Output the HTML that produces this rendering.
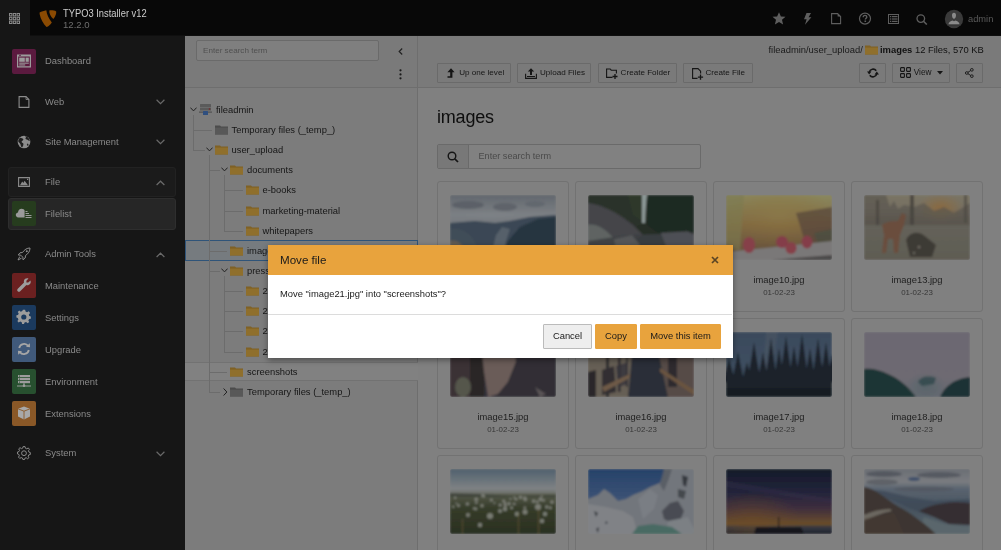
<!DOCTYPE html>
<html><head><meta charset="utf-8">
<style>
*{box-sizing:border-box;margin:0;padding:0}
html,body{width:1001px;height:550px;overflow:hidden;background:#7f7f7f;font-family:"Liberation Sans",sans-serif;font-size:9.4px;color:#111}
.abs{position:absolute}
#topbar{position:absolute;z-index:2;left:0;top:0;width:1001px;height:35px;background:#080808;box-shadow:0 1px 0 #0f0f0f}
#tgl{position:absolute;left:0;top:0;width:30px;height:36px;background:#161616}
#side{position:absolute;left:0;top:35px;width:185px;height:515px;background:#161616}
.mi{position:absolute;left:45px;color:#8a8a8a;font-size:9.4px;line-height:12px;white-space:nowrap}
.ibox{position:absolute;left:12px;width:24px;height:24px;border-radius:2px}
#tree{position:absolute;left:185px;top:35px;width:233px;height:515px;background:#7c7c7c;border-right:1px solid #6e6e6e}
#treehead{position:absolute;left:0;top:0;width:232px;height:53px;background:#7a7a7a;border-bottom:1px solid #6e6e6e}
#content{position:absolute;left:418px;top:35px;width:583px;height:515px;background:#808080}
#dochead{position:absolute;left:0;top:0;width:583px;height:53px;background:#7a7a7a;border-bottom:1px solid #6e6e6e}
.btn{position:absolute;height:20px;border:1px solid #6a6a6a;background:#7a7a7a;border-radius:1px;font-size:8.6px;color:#1a1a1a;line-height:18px;white-space:nowrap}
.tr{position:absolute;white-space:nowrap;font-size:9.4px;color:#161616;line-height:12px}
.card{position:absolute;width:132px;height:131px;border:1px solid #727272;border-radius:3px;background:#808080}
.card .img{position:absolute;left:12px;top:13px;width:106px;height:65px;overflow:hidden;border-radius:2px}
.card .img svg{filter:blur(0.7px)}
.card .nm{position:absolute;left:0;width:130px;top:92.4px;text-align:center;font-size:9.4px;color:#1e1e1e;line-height:12px}
.card .dt{position:absolute;left:0;width:130px;top:106.4px;text-align:center;font-size:7.9px;color:#363636;line-height:10px}
#modal{position:absolute;left:268px;top:245px;width:465px;height:113px;background:#fff;box-shadow:0 2px 6px rgba(0,0,0,.4)}
#mhead{position:absolute;left:0;top:0;width:465px;height:30px;background:#e8a33d}
.mbtn{position:absolute;top:79px;height:25px;border-radius:1px;font-size:9.4px;line-height:22px;text-align:center;color:#1a1a1a}
</style></head><body>
<div id="root" style="position:absolute;left:0;top:0;width:1001px;height:550px;will-change:transform">
<!-- TOPBAR -->
<div id="topbar">
  <div id="tgl">
    <svg class="abs" style="left:9px;top:13px" width="11" height="11" viewBox="0 0 11 11"><g fill="none" stroke="#8a8a8a" stroke-width="1"><rect x="0.5" y="0.5" width="2.4" height="2.4"/><rect x="4.3" y="0.5" width="2.4" height="2.4"/><rect x="8.1" y="0.5" width="2.4" height="2.4"/><rect x="0.5" y="4.3" width="2.4" height="2.4"/><rect x="4.3" y="4.3" width="2.4" height="2.4"/><rect x="8.1" y="4.3" width="2.4" height="2.4"/><rect x="0.5" y="8.1" width="2.4" height="2.4"/><rect x="4.3" y="8.1" width="2.4" height="2.4"/><rect x="8.1" y="8.1" width="2.4" height="2.4"/></g></svg>
  </div>
  <svg class="abs" style="left:36px;top:6px" width="24" height="24" viewBox="0 0 24 24">
    <path d="M3.6 6.6 C5.5 5.6 8 4.8 10.3 4.3 C10.8 8 12.5 12.5 15.8 16.4 C14.6 18.5 12.5 20.3 10.5 21.1 C7.5 18 4.5 13 3.6 8 Z" fill="#8a4a02"/>
    <path d="M13.3 4.4 C15.5 4.1 18.5 4.3 20.2 5.4 C20.4 6.8 20 9.5 17.4 13 C14.8 10.8 13 7 13.3 4.4 Z" fill="#8a4a02"/>
  </svg>
  <div class="abs" style="left:63px;top:8px;font-size:10.4px;color:#cdcdcd;line-height:12px;white-space:nowrap;transform:scaleX(0.9);transform-origin:0 0">TYPO3 Installer v12</div>
  <div class="abs" style="left:63px;top:19px;font-size:9.6px;color:#6e6e6e;line-height:12px">12.2.0</div>
  <!-- right icons -->
  <svg class="abs" style="left:772px;top:12px" width="14" height="13" viewBox="0 0 14 13"><path d="M7 0.3 L8.9 4.4 L13.5 4.8 L10 7.8 L11.1 12.5 L7 10 L2.9 12.5 L4 7.8 L0.5 4.8 L5.1 4.4 Z" fill="#5e5e5e"/></svg>
  <svg class="abs" style="left:803px;top:13px" width="9" height="12" viewBox="0 0 9 12"><path d="M3.5 0 L8 0 L5.6 4.2 L8.4 4.2 L2 11.8 L3.6 6.3 L1 6.3 Z" fill="#5e5e5e"/></svg>
  <svg class="abs" style="left:831px;top:13px" width="11" height="12" viewBox="0 0 11 12"><path d="M0.6 0.6 H6.6 L9.6 3.6 V10.6 H0.6 Z" fill="none" stroke="#5e5e5e" stroke-width="1.1"/><path d="M6.6 0.6 V3.6 H9.6" fill="#5e5e5e"/></svg>
  <svg class="abs" style="left:858px;top:12px" width="14" height="14" viewBox="0 0 14 14"><circle cx="7" cy="6.6" r="5.5" fill="none" stroke="#5e5e5e" stroke-width="1.2"/><path d="M5.2 5.2 C5.2 4 6 3.4 7 3.4 C8 3.4 8.8 4 8.8 5 C8.8 6.2 7.3 6.3 7.3 7.6" fill="none" stroke="#5e5e5e" stroke-width="1.4"/><rect x="6.5" y="8.5" width="1.6" height="1.5" fill="#5e5e5e"/></svg>
  <svg class="abs" style="left:888px;top:14px" width="11" height="10" viewBox="0 0 11 10"><rect x="0.5" y="0.5" width="10" height="9" fill="none" stroke="#5e5e5e" stroke-width="1"/><g fill="#5e5e5e"><rect x="2" y="2" width="1.3" height="1.2"/><rect x="4" y="2" width="5.5" height="1.2"/><rect x="2" y="4.4" width="1.3" height="1.2"/><rect x="4" y="4.4" width="5.5" height="1.2"/><rect x="2" y="6.8" width="1.3" height="1.2"/><rect x="4" y="6.8" width="5.5" height="1.2"/></g></svg>
  <svg class="abs" style="left:916px;top:14px" width="12" height="11" viewBox="0 0 12 11"><circle cx="4.8" cy="4.6" r="3.8" fill="none" stroke="#5e5e5e" stroke-width="1.3"/><path d="M7.5 7.3 L10.8 10.5" stroke="#5e5e5e" stroke-width="1.6"/></svg>
  <svg class="abs" style="left:944px;top:8.5px" width="20" height="20" viewBox="0 0 20 20"><circle cx="10" cy="10" r="9.2" fill="#3a3a3a"/><path d="M10 3.8 C8.6 3.8 8 4.9 8 6.3 C8 8.2 8.8 9.8 10 9.8 C11.2 9.8 12 8.2 12 6.3 C12 4.9 11.4 3.8 10 3.8 Z M4.4 15.3 C4.9 13.2 6.6 12.3 8.6 11.6 L10 12.3 L11.4 11.6 C13.4 12.3 15.1 13.2 15.6 15.3 Z" fill="#8a8a8a"/><path d="M3.6 16 H16.4 V16.8 H3.6 Z" fill="#333"/></svg>
  <div class="abs" style="left:968px;top:13px;font-size:9.3px;color:#5a5a5a;line-height:12px">admin</div>
</div>

<!-- SIDEBAR -->
<div id="side">
  <!-- Dashboard -->
  <div class="ibox" style="top:14px;height:25px;background:#5b1a3f"></div>
  <svg class="abs" style="left:16px;top:18px" width="16" height="16" viewBox="0 0 16 16"><g fill="#9c9c9c"><path d="M1 1.5 H15 V14.5 H1 Z M2.2 3.6 V13.3 H13.8 V3.6 Z"/><rect x="3" y="1.9" width="2" height=".8" fill="#5a1a3e"/><rect x="3.2" y="4.6" width="5.6" height="4.2"/><rect x="9.6" y="4.6" width="3.2" height="4.2"/><rect x="3.2" y="9.6" width="9.6" height="1.1"/><rect x="3.2" y="11.4" width="6" height="1.1"/></g></svg>
  <div class="mi" style="top:20px">Dashboard</div>
  <!-- Web -->
  <svg class="abs" style="left:18px;top:61px" width="12" height="12" viewBox="0 0 12 12"><path d="M1.1 0.6 H8 L10.9 3.5 V11.4 H1.1 Z" fill="none" stroke="#8c8c8c" stroke-width="1.1"/><path d="M8 0.6 V3.5 H10.9" fill="none" stroke="#8c8c8c" stroke-width=".8"/></svg>
  <div class="mi" style="top:60.7px">Web</div>
  <svg class="abs chev" style="left:156px;top:64px" width="9" height="6" viewBox="0 0 9 6"><path d="M0.6 0.8 L4.5 4.6 L8.4 0.8" fill="none" stroke="#6a6a6a" stroke-width="1.2"/></svg>
  <!-- Site Management -->
  <svg class="abs" style="left:17px;top:100px" width="14" height="14" viewBox="0 0 14 14"><circle cx="7" cy="7" r="6.3" fill="#8c8c8c"/><path d="M3.2 2.8 C4.5 3.5 5.5 3 6.2 4 C6.8 5 5.5 5.8 4.8 6.2 C4.2 6.8 5 7.8 5.8 8 C6.8 8.4 6.5 9.8 6 11 C5.5 12 5.2 12.6 4.6 12.3 C3.6 11 3.8 9.6 3 8.6 C2.2 7.5 1.3 7 1.2 6 C1.5 4.6 2.2 3.5 3.2 2.8 Z M8 1 C8.8 1.6 9.3 2.4 8.6 3.1 C8 3.6 8.8 4.4 9.6 4.6 C10.8 4.9 11.6 5.8 12.8 6 C12.6 3.5 10.6 1.4 8 1 Z M10.5 8.5 C11.2 8.8 11.8 9.8 11.4 10.4 C10.8 11.2 10 10.5 9.8 9.8 Z" fill="#1f1f1f"/></svg>
  <div class="mi" style="top:100.7px">Site Management</div>
  <svg class="abs chev" style="left:156px;top:104px" width="9" height="6" viewBox="0 0 9 6"><path d="M0.6 0.8 L4.5 4.6 L8.4 0.8" fill="none" stroke="#6a6a6a" stroke-width="1.2"/></svg>
  <!-- File group -->
  <div class="abs" style="left:8px;top:132px;width:168px;height:30px;background:#1b1b1b;border:1px solid #222;border-radius:3px"></div>
  <svg class="abs" style="left:18px;top:142px" width="12" height="10" viewBox="0 0 12 10"><path d="M0.6 0.6 H11.4 V9.4 H0.6 Z" fill="none" stroke="#8c8c8c" stroke-width="1.1"/><path d="M2 8.2 L4.2 4.6 L5.4 6 L6.6 3.8 L10 8.2 Z" fill="#8c8c8c"/><rect x="9" y="1.8" width="1.2" height="1.2" fill="#8c8c8c"/></svg>
  <div class="mi" style="top:141px">File</div>
  <svg class="abs chev" style="left:156px;top:145px" width="9" height="6" viewBox="0 0 9 6"><path d="M0.6 5 L4.5 1.2 L8.4 5" fill="none" stroke="#6a6a6a" stroke-width="1.2"/></svg>
  <!-- Filelist -->
  <div class="abs" style="left:8px;top:163px;width:168px;height:32px;background:#262626;border:1px solid #2e2e2e;border-radius:3px"></div>
  <div class="ibox" style="top:166px;height:25px;background:#263c1e"></div>
  <svg class="abs" style="left:15px;top:170px" width="18" height="16" viewBox="0 0 18 16"><path d="M3.5 12.5 C1.5 12.5 0.8 11 0.8 9.8 C0.8 8.3 2 7.4 3 7.4 C3.1 5.4 4.6 3.8 6.6 3.8 C8.2 3.8 9.2 4.6 9.6 5.5 V12.5 Z" fill="#9a9a9a"/><g fill="#9a9a9a"><rect x="10.5" y="6" width="2" height="1"/><rect x="10.5" y="8" width="3.5" height="1"/><rect x="10.5" y="10" width="6" height="1"/><rect x="10.5" y="12" width="6" height="1"/></g></svg>
  <div class="mi" style="top:173px">Filelist</div>
  <!-- Admin Tools -->
  <svg class="abs" style="left:17px;top:212px" width="14" height="14" viewBox="0 0 14 14"><path d="M13 1 C10 1 7.5 2.5 5.5 5.5 L3 5.8 L1.2 8 L3.8 8.2 L5.8 10.2 L6 12.8 L8.2 11 L8.5 8.5 C11.5 6.5 13 4 13 1 Z M2.8 9.5 L1 13 L4.5 11.2" fill="none" stroke="#8c8c8c" stroke-width="1"/><circle cx="9.8" cy="4.2" r="1" fill="#8c8c8c"/></svg>
  <div class="mi" style="top:213px">Admin Tools</div>
  <svg class="abs chev" style="left:156px;top:217px" width="9" height="6" viewBox="0 0 9 6"><path d="M0.6 5 L4.5 1.2 L8.4 5" fill="none" stroke="#6a6a6a" stroke-width="1.2"/></svg>
  <!-- Maintenance -->
  <div class="ibox" style="top:238px;height:25px;background:#6b2020"></div>
  <svg class="abs" style="left:16px;top:242px" width="16" height="16" viewBox="0 0 16 16"><path d="M14.5 3.5 L12.2 5.6 L10.4 5.6 L10.4 3.8 L12.5 1.5 C10.5 0.8 8.6 1.6 8 3.4 C7.7 4.3 7.8 5 8 5.6 L1.8 11.8 C1 12.6 1 13.6 1.7 14.3 C2.4 15 3.4 15 4.2 14.2 L10.4 8 C11 8.2 11.7 8.3 12.6 8 C14.4 7.4 15.2 5.5 14.5 3.5 Z" fill="#9c9c9c"/></svg>
  <div class="mi" style="top:245px">Maintenance</div>
  <!-- Settings -->
  <div class="ibox" style="top:270px;height:25px;background:#1b3a5e"></div>
  <svg class="abs" style="left:16px;top:274px" width="16" height="16" viewBox="0 0 16 16"><path d="M6.8 1 H9.2 L9.6 3 L11.2 3.8 L13 2.7 L14.4 4.4 L13.1 6 L13.5 7.6 L15.2 8.3 V10.5 L13.4 10.8 L12.6 12.4 L13.5 14 L11.8 15.2 L10.2 14 L8.6 14.4 L8 16 H6 L5.6 14.3 L4 13.6 L2.4 14.6 L1 13 L2.1 11.5 L1.5 9.8 L0 9.2 V7 L1.7 6.5 L2.4 5 L1.4 3.4 L3 2 L4.6 3.1 L6.2 2.5 Z" fill="#9c9c9c" transform="translate(0.4,-0.3) scale(0.95)"/><circle cx="7.8" cy="8" r="2.6" fill="#1b3a5e"/></svg>
  <div class="mi" style="top:277px">Settings</div>
  <!-- Upgrade -->
  <div class="ibox" style="top:302px;height:25px;background:#40597a"></div>
  <svg class="abs" style="left:16px;top:306px" width="16" height="16" viewBox="0 0 16 16"><path d="M3.2 7 A5 5 0 0 1 12.2 5" fill="none" stroke="#a6a6a6" stroke-width="1.8"/><path d="M12.8 9 A5 5 0 0 1 3.8 11" fill="none" stroke="#a6a6a6" stroke-width="1.8"/><path d="M10 5.8 L14 6.2 L13.8 2.2 Z M6 10.2 L2 9.8 L2.2 13.8 Z" fill="#a6a6a6"/></svg>
  <div class="mi" style="top:309px">Upgrade</div>
  <!-- Environment -->
  <div class="ibox" style="top:334px;height:25px;background:#27502f"></div>
  <svg class="abs" style="left:16px;top:338px" width="16" height="16" viewBox="0 0 16 16"><g fill="#9c9c9c"><rect x="2" y="2" width="12" height="2.2"/><rect x="2" y="5" width="12" height="2.2"/><rect x="2" y="8" width="12" height="2.2"/><rect x="7.4" y="10.2" width="1.2" height="2.5"/><rect x="1" y="12.5" width="14" height="1"/><circle cx="8" cy="12.8" r="1.3"/></g><g fill="#27502f"><rect x="3" y="2.6" width="1" height="1"/><rect x="3" y="5.6" width="1" height="1"/><rect x="3" y="8.6" width="1" height="1"/></g></svg>
  <div class="mi" style="top:341px">Environment</div>
  <!-- Extensions -->
  <div class="ibox" style="top:366px;height:25px;background:#8a5827"></div>
  <svg class="abs" style="left:16px;top:370px" width="16" height="16" viewBox="0 0 16 16"><path d="M8 1.5 L14 3.8 V11.6 L8 14.5 L2 11.6 V3.8 Z" fill="#a8a8a8"/><path d="M2 3.8 L8 6.2 L14 3.8 M8 6.2 V14.5" fill="none" stroke="#8a5827" stroke-width=".9"/></svg>
  <div class="mi" style="top:373px">Extensions</div>
  <!-- System -->
  <svg class="abs" style="left:17px;top:411px" width="14" height="14" viewBox="0 0 14 14"><path d="M6 0.8 H8 L8.4 2.5 L9.8 3.1 L11.3 2.2 L12.5 3.6 L11.5 5 L11.9 6.4 L13.4 6.9 V8.9 L11.8 9.3 L11.2 10.6 L12 12.1 L10.6 13.2 L9.2 12.2 L7.9 12.6 L7.5 14 H5.8 L5.4 12.5 L4 12 L2.6 12.9 L1.3 11.5 L2.2 10.2 L1.7 8.8 L0.3 8.3 V6.3 L1.8 5.9 L2.4 4.6 L1.5 3.2 L2.9 1.9 L4.3 2.9 L5.6 2.4 Z" fill="none" stroke="#8c8c8c" stroke-width="1" transform="translate(0.2,-0.2) scale(0.98)"/><circle cx="7" cy="7.2" r="2.4" fill="none" stroke="#8c8c8c" stroke-width="1"/></svg>
  <div class="mi" style="top:412px">System</div>
  <svg class="abs chev" style="left:156px;top:416px" width="9" height="6" viewBox="0 0 9 6"><path d="M0.6 0.8 L4.5 4.6 L8.4 0.8" fill="none" stroke="#6a6a6a" stroke-width="1.2"/></svg>
</div>

<!-- TREE -->
<div id="tree">
  <div id="treehead">
    <div class="abs" style="left:11px;top:5px;width:183px;height:21px;background:#7f7f7f;border:1px solid #6a6a6a;border-radius:2px"></div>
    <div class="abs" style="left:18px;top:10px;font-size:8.1px;line-height:11px;color:#505050;white-space:nowrap">Enter search term</div>
    <svg class="abs" style="left:212.5px;top:13px" width="5" height="7" viewBox="0 0 5 7"><path d="M4.2 0.5 L1.2 3.5 L4.2 6.5" fill="none" stroke="#222" stroke-width="1.2"/></svg>
    <svg class="abs" style="left:214px;top:34px" width="3" height="11" viewBox="0 0 3 11"><circle cx="1.5" cy="1.3" r="1.1" fill="#1a1a1a"/><circle cx="1.5" cy="5.4" r="1.1" fill="#1a1a1a"/><circle cx="1.5" cy="9.3" r="1.1" fill="#1a1a1a"/></svg>
  </div>
<div class="abs" style="left:0;top:205px;width:233px;height:21px;background:#767b7f;border:1px solid #2f5479"></div>
<div class="abs" style="left:0;top:326.5px;width:233px;height:19.5px;background:#818181;border-top:1px solid #727272;border-bottom:1px solid #727272"></div>
<div class="abs" style="left:8.0px;top:79.8px;width:1.0px;height:35.3px;background:#6c6c6c"></div>
<div class="abs" style="left:8.0px;top:94.9px;width:18.5px;height:1.0px;background:#6c6c6c"></div>
<div class="abs" style="left:8.0px;top:115.1px;width:11.5px;height:1.0px;background:#6c6c6c"></div>
<div class="abs" style="left:23.5px;top:120.1px;width:1.0px;height:236.8px;background:#6c6c6c"></div>
<div class="abs" style="left:23.5px;top:135.2px;width:11.5px;height:1.0px;background:#6c6c6c"></div>
<div class="abs" style="left:23.5px;top:215.8px;width:18.5px;height:1.0px;background:#6c6c6c"></div>
<div class="abs" style="left:23.5px;top:236.0px;width:11.5px;height:1.0px;background:#6c6c6c"></div>
<div class="abs" style="left:23.5px;top:336.8px;width:18.5px;height:1.0px;background:#6c6c6c"></div>
<div class="abs" style="left:23.5px;top:356.9px;width:11.5px;height:1.0px;background:#6c6c6c"></div>
<div class="abs" style="left:39.0px;top:140.2px;width:1.0px;height:55.4px;background:#6c6c6c"></div>
<div class="abs" style="left:39.0px;top:155.4px;width:18.5px;height:1.0px;background:#6c6c6c"></div>
<div class="abs" style="left:39.0px;top:175.6px;width:18.5px;height:1.0px;background:#6c6c6c"></div>
<div class="abs" style="left:39.0px;top:195.7px;width:18.5px;height:1.0px;background:#6c6c6c"></div>
<div class="abs" style="left:39.0px;top:241.0px;width:1.0px;height:75.6px;background:#6c6c6c"></div>
<div class="abs" style="left:39.0px;top:256.1px;width:18.5px;height:1.0px;background:#6c6c6c"></div>
<div class="abs" style="left:39.0px;top:276.3px;width:18.5px;height:1.0px;background:#6c6c6c"></div>
<div class="abs" style="left:39.0px;top:296.4px;width:18.5px;height:1.0px;background:#6c6c6c"></div>
<div class="abs" style="left:39.0px;top:316.6px;width:18.5px;height:1.0px;background:#6c6c6c"></div>
<svg class="abs" style="left:5.0px;top:71.8px" width="7" height="5" viewBox="0 0 7 5"><path d="M0.4 0.6 L3.5 3.9 L6.6 0.6" fill="none" stroke="#222" stroke-width="1"/></svg>
<svg class="abs" style="left:14.0px;top:68.8px" width="13" height="11" viewBox="0 0 13 11"><rect x="1" y="0" width="11" height="3" rx=".5" fill="#5a5a5a"/><rect x="1" y="3.6" width="11" height="3" rx=".5" fill="#5a5a5a"/><rect x="0" y="7.6" width="13" height="1" fill="#4a4a4a"/><rect x="4" y="7" width="5" height="4" rx=".6" fill="#2f4f7f"/><rect x="9.8" y="4.4" width="1.4" height="1.2" fill="#7a2020"/></svg>
<div class="tr" style="left:31.0px;top:68.8px">fileadmin</div>
<svg class="abs" style="left:29.5px;top:89.94999999999999px" width="13" height="10" viewBox="0 0 13 10"><path d="M0 0.6 H5 L6 1.6 H13 V9.4 H0 Z" fill="#4c4c4c"/><rect x="0" y="2.6" width="13" height="6.8" fill="#585858"/></svg>
<div class="tr" style="left:46.5px;top:88.94999999999999px">Temporary files (_temp_)</div>
<svg class="abs" style="left:20.5px;top:112.1px" width="7" height="5" viewBox="0 0 7 5"><path d="M0.4 0.6 L3.5 3.9 L6.6 0.6" fill="none" stroke="#222" stroke-width="1"/></svg>
<svg class="abs" style="left:29.5px;top:110.1px" width="13" height="10" viewBox="0 0 13 10"><path d="M0 0.6 H5 L6 1.6 H13 V9.4 H0 Z" fill="#7f6125"/><rect x="0" y="2.6" width="13" height="6.8" fill="#8f6f2c"/></svg>
<div class="tr" style="left:46.5px;top:109.1px">user_upload</div>
<svg class="abs" style="left:36.0px;top:132.25px" width="7" height="5" viewBox="0 0 7 5"><path d="M0.4 0.6 L3.5 3.9 L6.6 0.6" fill="none" stroke="#222" stroke-width="1"/></svg>
<svg class="abs" style="left:45.0px;top:130.25px" width="13" height="10" viewBox="0 0 13 10"><path d="M0 0.6 H5 L6 1.6 H13 V9.4 H0 Z" fill="#7f6125"/><rect x="0" y="2.6" width="13" height="6.8" fill="#8f6f2c"/></svg>
<div class="tr" style="left:62.0px;top:129.25px">documents</div>
<svg class="abs" style="left:60.5px;top:150.39999999999998px" width="13" height="10" viewBox="0 0 13 10"><path d="M0 0.6 H5 L6 1.6 H13 V9.4 H0 Z" fill="#7f6125"/><rect x="0" y="2.6" width="13" height="6.8" fill="#8f6f2c"/></svg>
<div class="tr" style="left:77.5px;top:149.39999999999998px">e-books</div>
<svg class="abs" style="left:60.5px;top:170.55px" width="13" height="10" viewBox="0 0 13 10"><path d="M0 0.6 H5 L6 1.6 H13 V9.4 H0 Z" fill="#7f6125"/><rect x="0" y="2.6" width="13" height="6.8" fill="#8f6f2c"/></svg>
<div class="tr" style="left:77.5px;top:169.55px">marketing-material</div>
<svg class="abs" style="left:60.5px;top:190.7px" width="13" height="10" viewBox="0 0 13 10"><path d="M0 0.6 H5 L6 1.6 H13 V9.4 H0 Z" fill="#7f6125"/><rect x="0" y="2.6" width="13" height="6.8" fill="#8f6f2c"/></svg>
<div class="tr" style="left:77.5px;top:189.7px">whitepapers</div>
<svg class="abs" style="left:45.0px;top:210.84999999999997px" width="13" height="10" viewBox="0 0 13 10"><path d="M0 0.6 H5 L6 1.6 H13 V9.4 H0 Z" fill="#7f6125"/><rect x="0" y="2.6" width="13" height="6.8" fill="#8f6f2c"/></svg>
<div class="tr" style="left:62.0px;top:209.84999999999997px">images</div>
<svg class="abs" style="left:36.0px;top:233.0px" width="7" height="5" viewBox="0 0 7 5"><path d="M0.4 0.6 L3.5 3.9 L6.6 0.6" fill="none" stroke="#222" stroke-width="1"/></svg>
<svg class="abs" style="left:45.0px;top:231.0px" width="13" height="10" viewBox="0 0 13 10"><path d="M0 0.6 H5 L6 1.6 H13 V9.4 H0 Z" fill="#7f6125"/><rect x="0" y="2.6" width="13" height="6.8" fill="#8f6f2c"/></svg>
<div class="tr" style="left:62.0px;top:230.0px">press</div>
<svg class="abs" style="left:60.5px;top:251.14999999999998px" width="13" height="10" viewBox="0 0 13 10"><path d="M0 0.6 H5 L6 1.6 H13 V9.4 H0 Z" fill="#7f6125"/><rect x="0" y="2.6" width="13" height="6.8" fill="#8f6f2c"/></svg>
<div class="tr" style="left:77.5px;top:250.14999999999998px">2022</div>
<svg class="abs" style="left:60.5px;top:271.3px" width="13" height="10" viewBox="0 0 13 10"><path d="M0 0.6 H5 L6 1.6 H13 V9.4 H0 Z" fill="#7f6125"/><rect x="0" y="2.6" width="13" height="6.8" fill="#8f6f2c"/></svg>
<div class="tr" style="left:77.5px;top:270.3px">2021</div>
<svg class="abs" style="left:60.5px;top:291.45px" width="13" height="10" viewBox="0 0 13 10"><path d="M0 0.6 H5 L6 1.6 H13 V9.4 H0 Z" fill="#7f6125"/><rect x="0" y="2.6" width="13" height="6.8" fill="#8f6f2c"/></svg>
<div class="tr" style="left:77.5px;top:290.45px">2020</div>
<svg class="abs" style="left:60.5px;top:311.59999999999997px" width="13" height="10" viewBox="0 0 13 10"><path d="M0 0.6 H5 L6 1.6 H13 V9.4 H0 Z" fill="#7f6125"/><rect x="0" y="2.6" width="13" height="6.8" fill="#8f6f2c"/></svg>
<div class="tr" style="left:77.5px;top:310.59999999999997px">2019</div>
<svg class="abs" style="left:45.0px;top:331.75px" width="13" height="10" viewBox="0 0 13 10"><path d="M0 0.6 H5 L6 1.6 H13 V9.4 H0 Z" fill="#7f6125"/><rect x="0" y="2.6" width="13" height="6.8" fill="#8f6f2c"/></svg>
<div class="tr" style="left:62.0px;top:330.75px">screenshots</div>
<svg class="abs" style="left:37.5px;top:352.9px" width="5" height="8" viewBox="0 0 5 8"><path d="M0.6 0.5 L3.9 4 L0.6 7.5" fill="none" stroke="#222" stroke-width="1"/></svg>
<svg class="abs" style="left:45.0px;top:351.9px" width="13" height="10" viewBox="0 0 13 10"><path d="M0 0.6 H5 L6 1.6 H13 V9.4 H0 Z" fill="#4c4c4c"/><rect x="0" y="2.6" width="13" height="6.8" fill="#585858"/></svg>
<div class="tr" style="left:62.0px;top:350.9px">Temporary files (_temp_)</div>
</div>

<!-- CONTENT -->
<div id="content">
<div id="dochead">
<div class="abs" style="left:350.5px;top:9px;font-size:9.4px;line-height:12px;color:#1a1a1a;white-space:nowrap">fileadmin/user_upload/</div>
<svg class="abs" style="left:447.0px;top:10.0px" width="13" height="10" viewBox="0 0 13 10"><path d="M0 0.6 H5 L6 1.6 H13 V9.4 H0 Z" fill="#7f6125"/><rect x="0" y="2.6" width="13" height="6.8" fill="#8f6f2c"/></svg>
<div class="abs" style="left:462px;top:9px;font-size:9.4px;line-height:12px;color:#111;white-space:nowrap"><b>images</b> 12 Files, 570 KB</div>
<div class="btn" style="left:19.0px;top:28px;width:74.0px"></div>
<svg class="abs" style="left:29.0px;top:33px" width="8" height="11" viewBox="0 0 8 11"><path d="M4 0.3 L7.6 4.2 H5.4 V9.8 H0.5 V8.2 H3.2 V4.2 H0.4 Z" fill="#151515"/></svg>
<div class="abs" style="left:41.2px;top:32.5px;font-size:8.1px;line-height:10px;color:#161616;white-space:nowrap">Up one level</div>
<div class="btn" style="left:99.0px;top:28px;width:74.0px"></div>
<svg class="abs" style="left:106.7px;top:33px" width="12" height="11" viewBox="0 0 12 11"><path d="M6 0.3 L9.2 3.6 H7 V7 H5 V3.6 H2.8 Z" fill="#151515"/><path d="M0.6 5.8 V10.4 H11.4 V5.8" fill="none" stroke="#151515" stroke-width="1.1"/><rect x="2" y="8" width="8" height="1" fill="#151515"/></svg>
<div class="abs" style="left:122.0px;top:32.5px;font-size:8.1px;line-height:10px;color:#161616;white-space:nowrap">Upload Files</div>
<div class="btn" style="left:180.0px;top:28px;width:79.0px"></div>
<svg class="abs" style="left:187.8px;top:33px" width="12" height="11" viewBox="0 0 12 11"><path d="M6.5 9.4 H0.6 V1 H4.2 L5.2 2.2 H10.4 V5.5" fill="none" stroke="#151515" stroke-width="1.1"/><path d="M9 6 V11 M6.5 8.5 H11.5" stroke="#151515" stroke-width="1.3"/></svg>
<div class="abs" style="left:202.6px;top:32.5px;font-size:8.1px;line-height:10px;color:#161616;white-space:nowrap">Create Folder</div>
<div class="btn" style="left:265.0px;top:28px;width:70.0px"></div>
<svg class="abs" style="left:273.5px;top:33px" width="12" height="12" viewBox="0 0 12 12"><path d="M5.5 10.4 H0.6 V0.6 H6 L8.6 3.2 V5.5" fill="none" stroke="#151515" stroke-width="1.1"/><path d="M8.5 6.5 V11.8 M5.9 9.1 H11.1" stroke="#151515" stroke-width="1.3"/></svg>
<div class="abs" style="left:287.4px;top:32.5px;font-size:8.1px;line-height:10px;color:#161616;white-space:nowrap">Create File</div>
<div class="btn" style="left:441px;top:28px;width:27px"></div>
<svg class="abs" style="left:448.5px;top:31.5px" width="12" height="12" viewBox="0 0 12 12"><path d="M2.3 5.2 A3.8 3.8 0 0 1 9.2 3.8" fill="none" stroke="#151515" stroke-width="1.6"/><path d="M9.7 6.8 A3.8 3.8 0 0 1 2.8 8.2" fill="none" stroke="#151515" stroke-width="1.6"/><path d="M0 4.6 H4.4 L2.2 7.4 Z" fill="#151515"/><path d="M7.6 7.4 H12 L9.8 4.6 Z" fill="#151515"/></svg>
<div class="btn" style="left:474px;top:28px;width:58px"></div>
<svg class="abs" style="left:481.5px;top:32.0px" width="11" height="11" viewBox="0 0 11 11"><g fill="none" stroke="#151515" stroke-width="1.1"><rect x="0.6" y="0.6" width="3.8" height="3.8" rx=".6"/><rect x="6.6" y="0.6" width="3.8" height="3.8" rx=".6"/><rect x="0.6" y="6.6" width="3.8" height="3.8" rx=".6"/><rect x="6.6" y="6.6" width="3.8" height="3.8" rx=".6"/></g></svg>
<div class="abs" style="left:495.70000000000005px;top:32.3px;font-size:8.3px;line-height:10px;color:#161616">View</div>
<svg class="abs" style="left:519.0px;top:36.0px" width="6" height="4" viewBox="0 0 6 4"><path d="M0 0 H6 L3 3.4 Z" fill="#151515"/></svg>
<div class="btn" style="left:538px;top:28px;width:27px"></div>
<svg class="abs" style="left:547.0px;top:33.0px" width="9" height="10" viewBox="0 0 10 11"><g fill="none" stroke="#151515" stroke-width="1"><circle cx="7.6" cy="2" r="1.5"/><circle cx="2" cy="5.5" r="1.5"/><circle cx="7.6" cy="9" r="1.5"/><path d="M3.3 4.7 L6.3 2.8 M3.3 6.3 L6.3 8.2"/></g></svg>
</div>
<div class="abs" style="left:19px;top:71.3px;font-size:18px;line-height:22px;color:#0e0e0e;letter-spacing:-0.2px">images</div>
<div class="abs" style="left:18.5px;top:109px;width:264px;height:25px;border:1px solid #6a6a6a;border-radius:2px;background:#818181"></div>
<div class="abs" style="left:19.5px;top:110px;width:31px;height:23px;background:#787878;border-right:1px solid #6a6a6a"></div>
<svg class="abs" style="left:29.0px;top:115.5px" width="12" height="12" viewBox="0 0 12 12"><circle cx="5" cy="5" r="3.8" fill="none" stroke="#151515" stroke-width="1.4"/><path d="M7.8 7.8 L11 11" stroke="#151515" stroke-width="1.7"/></svg>
<div class="abs" style="left:60.5px;top:115.5px;font-size:9.15px;line-height:11px;color:#4a4a4a;white-space:nowrap">Enter search term</div>
<div class="card" style="left:19.0px;top:146.0px"><div class="img"><svg width="106" height="65" viewBox="0 0 106 65" preserveAspectRatio="none" style="display:block"><filter id="bl0" x="-5%" y="-5%" width="110%" height="110%"><feGaussianBlur stdDeviation="1"/></filter><g filter="url(#bl0)"><defs><linearGradient id="g0" x1="0" y1="0" x2="0" y2="1"><stop offset="0" stop-color="#62676e"/><stop offset=".3" stop-color="#7c8084"/><stop offset=".45" stop-color="#74787e"/></linearGradient></defs>
<rect width="106" height="65" fill="url(#g0)"/>
<ellipse cx="18" cy="10" rx="16" ry="4" fill="#585d64" opacity=".8"/><ellipse cx="55" cy="12" rx="12" ry="4" fill="#5a5f66" opacity=".8"/><ellipse cx="85" cy="9" rx="10" ry="3" fill="#62676e"/><ellipse cx="40" cy="20" rx="25" ry="3" fill="#7e8286" opacity=".7"/>
<path d="M0 28 L25 26 L45 28 L60 26 L80 22 L106 20 V65 H0 Z" fill="#3a4754"/>
<path d="M40 65 L46 40 L52 32 L60 34 L56 46 L52 65 Z" fill="#56606a"/>
<path d="M50 65 L58 46 L70 32 L88 24 L106 22 V65 Z" fill="#27343f"/>
<path d="M0 34 C10 32 16 36 22 42 L28 52 L22 65 H0 Z" fill="#414d58"/>
<path d="M0 46 C6 44 12 48 15 55 L17 65 H0 Z" fill="#625b52"/></g></svg></div><div class="nm">image2.jpg</div><div class="dt">01-02-23</div></div>
<div class="card" style="left:157.0px;top:146.0px"><div class="img"><svg width="106" height="65" viewBox="0 0 106 65" preserveAspectRatio="none" style="display:block"><filter id="bl1" x="-5%" y="-5%" width="110%" height="110%"><feGaussianBlur stdDeviation="1"/></filter><g filter="url(#bl1)"><rect width="106" height="65" fill="#262d27"/>
<path d="M0 0 H55 L58 25 L40 38 L0 30 Z" fill="#2c3329"/>
<path d="M0 8 C15 10 30 18 45 30 L55 40 L40 50 L0 42 Z" fill="#44454a"/>
<path d="M0 30 C8 28 18 34 26 44 L30 56 L22 65 H0 Z" fill="#5e6462"/>
<path d="M0 46 L40 40 L106 38 V65 H0 Z" fill="#3c3e42" opacity=".9"/>
<path d="M26 44 L44 40 L52 50 L40 58 L28 54 Z" fill="#5a5c5e" opacity=".8"/>
<path d="M20 56 L40 52 L48 62 L30 65 L18 65 Z" fill="#2a2c30"/>
<path d="M72 36 L96 34 L106 40 V55 L80 56 Z" fill="#4e5054"/>
<path d="M54 0 H59 L58 10 L57 28 L54 28 Z" fill="#8c9896"/>
<path d="M60 0 H106 V36 L70 38 L59 30 Z" fill="#1f2a22"/>
<path d="M40 0 H54 L54 26 L45 20 Z" fill="#2e3a2c" opacity=".7"/></g></svg></div><div class="nm">image4.jpg</div><div class="dt">01-02-23</div></div>
<div class="card" style="left:295.0px;top:146.0px"><div class="img"><svg width="106" height="65" viewBox="0 0 106 65" preserveAspectRatio="none" style="display:block"><filter id="bl2" x="-5%" y="-5%" width="110%" height="110%"><feGaussianBlur stdDeviation="1"/></filter><g filter="url(#bl2)"><defs><linearGradient id="g2" x1="0" y1="0" x2="0" y2="1"><stop offset="0" stop-color="#8a885e"/><stop offset=".45" stop-color="#806a44"/><stop offset="1" stop-color="#604c3a"/></linearGradient>
<radialGradient id="g2b" cx=".5" cy=".3" r=".5"><stop offset="0" stop-color="#8e7a48" stop-opacity=".6"/><stop offset="1" stop-color="#8c6a30" stop-opacity="0"/></radialGradient></defs>
<rect width="106" height="65" fill="url(#g2)"/>
<rect width="106" height="65" fill="url(#g2b)"/>
<path d="M0 0 H18 L14 55 H0 Z" fill="#7c7a50" opacity=".6"/>
<path d="M70 18 L106 12 V48 L80 50 Z" fill="#56443a" opacity=".7"/>
<path d="M88 38 L106 34 V48 L92 50 Z" fill="#4a5040" opacity=".7"/>
<path d="M0 57 L106 46 V65 H0 Z" fill="#7a7878"/>
<path d="M45 65 L106 60 V65 Z" fill="#4c4848"/>
<ellipse cx="23" cy="50" rx="6" ry="8" fill="#86404a"/><ellipse cx="56" cy="47" rx="6" ry="6" fill="#843e48"/><ellipse cx="65" cy="53" rx="5.6" ry="6" fill="#86404a"/><ellipse cx="81" cy="47" rx="5.4" ry="6.5" fill="#843e48"/></g></svg></div><div class="nm">image10.jpg</div><div class="dt">01-02-23</div></div>
<div class="card" style="left:433.0px;top:146.0px"><div class="img"><svg width="106" height="65" viewBox="0 0 106 65" preserveAspectRatio="none" style="display:block"><filter id="bl3" x="-5%" y="-5%" width="110%" height="110%"><feGaussianBlur stdDeviation="1"/></filter><g filter="url(#bl3)"><defs><linearGradient id="g3" x1="0" y1="0" x2="0" y2="1"><stop offset="0" stop-color="#7a7464"/><stop offset=".2" stop-color="#767062"/><stop offset=".42" stop-color="#5c5a50"/><stop offset=".5" stop-color="#64625a"/><stop offset="1" stop-color="#5e5c52"/></linearGradient>
<radialGradient id="g3b" cx=".72" cy=".2" r=".22"><stop offset="0" stop-color="#8a6a40"/><stop offset="1" stop-color="#8a6a40" stop-opacity="0"/></radialGradient></defs>
<rect width="106" height="65" fill="url(#g3)"/>
<rect width="106" height="65" fill="url(#g3b)"/>
<path d="M0 0 H22 L26 12 L30 6 L34 14 L40 10 L50 12 L60 8 L70 16 L80 12 L90 18 L106 8 V30 H0 Z" fill="#5a564e" opacity=".7"/>
<rect x="46" y="0" width="4" height="30" fill="#48443e" opacity=".9"/><rect x="12" y="5" width="3" height="25" fill="#48443e" opacity=".8"/><rect x="100" y="0" width="3" height="28" fill="#4c4842" opacity=".7"/>
<path d="M18 30 C22 26 30 26 34 26 L38 18 L42 20 L40 30 L36 40 L34 58 L30 58 L29 44 L24 44 L22 58 L18 58 L20 40 Z" fill="#6a4e3c"/>
<path d="M42 45 C46 36 56 36 62 42 L72 50 L68 62 L46 62 Z" fill="#3e3a34"/>
<circle cx="55" cy="52" r="1.5" fill="#6a6860"/><circle cx="50" cy="58" r="1.2" fill="#6a6860"/></g></svg></div><div class="nm">image13.jpg</div><div class="dt">01-02-23</div></div>
<div class="card" style="left:19.0px;top:283.0px"><div class="img"><svg width="106" height="65" viewBox="0 0 106 65" preserveAspectRatio="none" style="display:block"><filter id="bl4" x="-5%" y="-5%" width="110%" height="110%"><feGaussianBlur stdDeviation="1"/></filter><g filter="url(#bl4)"><rect width="106" height="65" fill="#33303a"/>
<path d="M0 0 H36 L34 65 H0 Z" fill="#3a3234"/>
<path d="M20 0 H36 L34 65 H20 Z" fill="#2a2628"/>
<ellipse cx="13" cy="55" rx="8" ry="10" fill="#55564c"/>
<path d="M30 0 H70 L66 30 L58 50 L48 62 L38 65 L34 40 Z" fill="#6a5c58"/>
<path d="M50 0 H70 L66 28 L58 20 Z" fill="#76685e" opacity=".7"/>
<path d="M62 0 H106 V65 H46 L58 50 L66 30 Z" fill="#302d34"/>
<path d="M85 55 L96 62 L90 65 Z" fill="#5a5456"/></g></svg></div><div class="nm">image15.jpg</div><div class="dt">01-02-23</div></div>
<div class="card" style="left:157.0px;top:283.0px"><div class="img"><svg width="106" height="65" viewBox="0 0 106 65" preserveAspectRatio="none" style="display:block"><filter id="bl5" x="-5%" y="-5%" width="110%" height="110%"><feGaussianBlur stdDeviation="1"/></filter><g filter="url(#bl5)"><rect width="106" height="65" fill="#3a3638"/>
<path d="M0 0 H52 L46 65 H0 Z" fill="#665e54"/>
<rect x="18" y="0" width="3" height="65" fill="#2a2a2e"/><rect x="30" y="0" width="2.5" height="60" fill="#2e2c30"/><rect x="38" y="0" width="2" height="55" fill="#333036"/><rect x="44" y="0" width="1.5" height="50" fill="#3a3838"/>
<path d="M0 40 L8 38 L8 65 H0 Z" fill="#2a282a"/>
<path d="M14 38 L26 34 L28 60 L14 63 Z" fill="#302e32"/>
<path d="M28 34 L40 30 L40 52 L30 55 Z" fill="#34323a" opacity=".8"/>
<path d="M14 55 L46 40 L47 43 L16 60 Z" fill="#6e5a46"/>
<path d="M46 0 H66 L80 65 H40 Z" fill="#2c2e38"/>
<path d="M66 0 H106 V65 H80 Z" fill="#564c46"/>
<rect x="80" y="0" width="9" height="55" fill="#2e2a2e"/>
<path d="M72 36 L106 58 V63 L72 40 Z" fill="#6a5440"/></g></svg></div><div class="nm">image16.jpg</div><div class="dt">01-02-23</div></div>
<div class="card" style="left:295.0px;top:283.0px"><div class="img"><svg width="106" height="65" viewBox="0 0 106 65" preserveAspectRatio="none" style="display:block"><filter id="bl6" x="-5%" y="-5%" width="110%" height="110%"><feGaussianBlur stdDeviation="1"/></filter><g filter="url(#bl6)"><defs><linearGradient id="g6" x1="0" y1="0" x2="0" y2="1"><stop offset="0" stop-color="#3a4a5c"/><stop offset=".5" stop-color="#3e4e60"/><stop offset="1" stop-color="#2a3440"/></linearGradient></defs>
<rect width="106" height="65" fill="url(#g6)"/>
<path d="M40 0 L52 0 L44 50 L36 50 Z" fill="#4e5866" opacity=".5"/>
<g fill="#1b212a"><path d="M3 26 L9.0 50 L-3.0 50 Z"/><path d="M12 20 L18.0 50 L6.0 50 Z"/><path d="M21 30 L26.0 50 L16.0 50 Z"/><path d="M28 10 L34.5 50 L21.5 50 Z"/><path d="M37 20 L42.5 50 L31.5 50 Z"/><path d="M45 6 L51.0 50 L39.0 50 Z"/><path d="M53 16 L58.5 50 L47.5 50 Z"/><path d="M60 4 L66.5 50 L53.5 50 Z"/><path d="M68 14 L74.0 50 L62.0 50 Z"/><path d="M76 2 L82.5 50 L69.5 50 Z"/><path d="M84 16 L89.5 50 L78.5 50 Z"/><path d="M92 6 L98.0 50 L86.0 50 Z"/><path d="M100 10 L106.0 50 L94.0 50 Z"/><path d="M106 22 L111.0 50 L101.0 50 Z"/></g>
<path d="M0 65 V46 L106 44 V65 Z" fill="#1b212a"/>
<rect x="0" y="56" width="106" height="9" fill="#161a22"/></g></svg></div><div class="nm">image17.jpg</div><div class="dt">01-02-23</div></div>
<div class="card" style="left:433.0px;top:283.0px"><div class="img"><svg width="106" height="65" viewBox="0 0 106 65" preserveAspectRatio="none" style="display:block"><filter id="bl7" x="-5%" y="-5%" width="110%" height="110%"><feGaussianBlur stdDeviation="1"/></filter><g filter="url(#bl7)"><defs><linearGradient id="g7" x1="0" y1="0" x2="0" y2="1"><stop offset="0" stop-color="#6c6872"/><stop offset=".7" stop-color="#6e6a72"/><stop offset="1" stop-color="#646870"/></linearGradient>
<radialGradient id="g7b" cx=".5" cy=".5" r=".5"><stop offset="0" stop-color="#56646a" stop-opacity=".9"/><stop offset="1" stop-color="#56646a" stop-opacity="0"/></radialGradient></defs>
<rect width="106" height="65" fill="url(#g7)"/>
<path d="M0 37 C8 36 16 38 24 42 C34 46 44 54 52 65 H0 Z" fill="#1f3434"/>
<ellipse cx="62" cy="54" rx="20" ry="14" fill="url(#g7b)"/>
<path d="M54 50 C56 45 64 43 72 46 L70 52 L58 54 Z" fill="#2a4446" opacity=".7"/>
<path d="M76 65 C80 56 88 47 106 45 V65 Z" fill="#1d3234"/></g></svg></div><div class="nm">image18.jpg</div><div class="dt">01-02-23</div></div>
<div class="card" style="left:19.0px;top:420.0px"><div class="img"><svg width="106" height="65" viewBox="0 0 106 65" preserveAspectRatio="none" style="display:block"><filter id="bl8" x="-5%" y="-5%" width="110%" height="110%"><feGaussianBlur stdDeviation="1"/></filter><g filter="url(#bl8)"><defs><linearGradient id="g8" x1="0" y1="0" x2="0" y2="1"><stop offset="0" stop-color="#50606e"/><stop offset=".3" stop-color="#7e8284"/><stop offset=".36" stop-color="#727470"/><stop offset=".4" stop-color="#545848"/><stop offset=".6" stop-color="#363c2a"/><stop offset="1" stop-color="#2a3020"/></linearGradient></defs>
<rect width="106" height="65" fill="url(#g8)"/>
<path d="M0 24 L30 25 L60 27 L106 26 V28 H0 Z" fill="#3a3e38" opacity=".7"/>
<g fill="#858780" opacity=".85"><circle cx="26.3" cy="33.6" r="1.3"/><circle cx="63.6" cy="34.8" r="1.1"/><circle cx="3.3" cy="37.7" r="1.2"/><circle cx="25.9" cy="39.9" r="1.4"/><circle cx="87.3" cy="32.7" r="1.5"/><circle cx="17.4" cy="34.9" r="1.7"/><circle cx="55.4" cy="36.4" r="1.5"/><circle cx="8.5" cy="36.6" r="1.5"/><circle cx="32.7" cy="26.4" r="1.7"/><circle cx="50.2" cy="36.1" r="1.7"/><circle cx="74.8" cy="38.9" r="1.3"/><circle cx="83.7" cy="32.2" r="1.7"/><circle cx="91.6" cy="27.4" r="1.1"/><circle cx="24.1" cy="39.5" r="1.3"/><circle cx="65.9" cy="30.2" r="1.4"/><circle cx="41.4" cy="30.9" r="1.5"/><circle cx="61.6" cy="38.7" r="1.5"/><circle cx="96.8" cy="38.0" r="1.8"/><circle cx="70.5" cy="28.3" r="1.7"/><circle cx="100.4" cy="38.7" r="1.5"/><circle cx="74.8" cy="29.0" r="1.7"/><circle cx="60.5" cy="30.0" r="1.1"/><circle cx="89.1" cy="39.9" r="1.1"/><circle cx="83.7" cy="31.7" r="1.1"/><circle cx="32.0" cy="36.8" r="1.7"/><circle cx="6.5" cy="34.6" r="1.0"/><circle cx="75.3" cy="30.6" r="1.7"/><circle cx="102.0" cy="33.1" r="1.8"/><circle cx="33.6" cy="27.1" r="1.5"/><circle cx="5.2" cy="28.8" r="1.3"/><circle cx="64.3" cy="28.2" r="1.0"/><circle cx="90.5" cy="30.4" r="1.8"/><circle cx="93.5" cy="31.3" r="1.4"/><circle cx="55.0" cy="35.0" r="1.5"/><circle cx="59.0" cy="34.7" r="1.8"/><circle cx="53.7" cy="32.0" r="1.6"/><circle cx="26.2" cy="30.2" r="1.8"/><circle cx="55.2" cy="33.7" r="1.0"/><circle cx="44.4" cy="34.1" r="1.0"/><circle cx="64.8" cy="34.9" r="1.0"/><circle cx="40" cy="47" r="3"/><circle cx="88" cy="38" r="3"/><circle cx="75" cy="43" r="2.5"/><circle cx="95" cy="45" r="2.2"/><circle cx="55" cy="40" r="2.2"/><circle cx="67" cy="45" r="2.3"/><circle cx="18" cy="46" r="2"/><circle cx="30" cy="56" r="2.2"/><circle cx="92" cy="52" r="2.2"/><circle cx="50" cy="42" r="2"/></g>
<g fill="#6a5a3a" opacity=".6"><rect x="88" y="40" width="1.2" height="25"/><rect x="68" y="44" width="1" height="21"/><rect x="12" y="50" width="1" height="15"/></g></g></svg></div><div class="nm">image19.jpg</div><div class="dt">01-02-23</div></div>
<div class="card" style="left:157.0px;top:420.0px"><div class="img"><svg width="106" height="65" viewBox="0 0 106 65" preserveAspectRatio="none" style="display:block"><filter id="bl9" x="-5%" y="-5%" width="110%" height="110%"><feGaussianBlur stdDeviation="1"/></filter><g filter="url(#bl9)"><defs><linearGradient id="g9" x1="0" y1="0" x2="0" y2="1"><stop offset="0" stop-color="#26426a"/><stop offset=".5" stop-color="#3e5476"/></linearGradient></defs>
<rect width="106" height="65" fill="url(#g9)"/>
<path d="M0 30 L10 26 L16 20 L22 24 L30 32 L38 30 L45 26 L55 22 L62 18 L72 14 L78 0 H106 V65 H0 Z" fill="#72767c"/>
<path d="M0 35 L18 38 L35 42 L45 48 L50 65 H0 Z" fill="#808286"/>
<path d="M50 30 L62 20 L70 26 L66 40 L55 50 Z" fill="#7a7e84"/>
<path d="M76 0 H84 L80 12 L76 22 L72 16 Z" fill="#5a5e66"/>
<path d="M94 6 L100 8 L98 18 L95 16 Z" fill="#34383e"/>
<path d="M74 42 L82 34 L90 32 L96 42 L92 52 L84 54 L76 50 Z" fill="#484c52"/>
<path d="M90 20 L98 22 L96 30 L90 28 Z" fill="#44484e"/>
<path d="M80 52 L100 48 L106 60 V65 H78 Z" fill="#7c8084"/>
<path d="M44 65 L50 57 L65 55 L84 58 L94 65 Z" fill="#4a6a64"/>
<path d="M6 42 L10 44 L8 48 Z M8 60 L11 58 L10 64 Z M18 52 L20 54 L17 55 Z" fill="#34383e"/></g></svg></div><div class="nm">image20.jpg</div><div class="dt">01-02-23</div></div>
<div class="card" style="left:295.0px;top:420.0px"><div class="img"><svg width="106" height="65" viewBox="0 0 106 65" preserveAspectRatio="none" style="display:block"><filter id="bl10" x="-5%" y="-5%" width="110%" height="110%"><feGaussianBlur stdDeviation="1"/></filter><g filter="url(#bl10)"><defs><linearGradient id="g10" x1="0" y1="0" x2="0" y2="1"><stop offset="0" stop-color="#151a2a"/><stop offset=".35" stop-color="#22243a"/><stop offset=".6" stop-color="#3e2e3e"/><stop offset=".78" stop-color="#5e4430"/><stop offset=".85" stop-color="#6a4e2a"/><stop offset=".89" stop-color="#383a44"/><stop offset="1" stop-color="#1e222c"/></linearGradient>
<radialGradient id="g10b" cx=".25" cy=".8" r=".45"><stop offset="0" stop-color="#6e4c26" stop-opacity=".6"/><stop offset="1" stop-color="#6e4c26" stop-opacity="0"/></radialGradient></defs>
<rect width="106" height="65" fill="url(#g10)"/>
<rect width="106" height="65" fill="url(#g10b)"/>
<path d="M0 12 L106 30 L106 34 L0 18 Z" fill="#3a3050" opacity=".35"/>
<path d="M28 65 L30 58 L75 58 L78 65 Z" fill="#14161c"/><rect x="52" y="48" width="1.2" height="10" fill="#14161c"/></g></svg></div><div class="nm">image21.jpg</div><div class="dt">01-02-23</div></div>
<div class="card" style="left:433.0px;top:420.0px"><div class="img"><svg width="106" height="65" viewBox="0 0 106 65" preserveAspectRatio="none" style="display:block"><filter id="bl11" x="-5%" y="-5%" width="110%" height="110%"><feGaussianBlur stdDeviation="1"/></filter><g filter="url(#bl11)"><defs><linearGradient id="g11" x1="0" y1="0" x2="0" y2="1"><stop offset="0" stop-color="#6a6e74"/><stop offset=".2" stop-color="#7a7c80"/><stop offset=".3" stop-color="#5a6470"/><stop offset=".6" stop-color="#46525e"/><stop offset="1" stop-color="#5a666c"/></linearGradient></defs>
<rect width="106" height="65" fill="url(#g11)"/>
<ellipse cx="20" cy="5" rx="18" ry="3" fill="#4e525a" opacity=".8"/><ellipse cx="75" cy="6" rx="22" ry="3" fill="#50545c" opacity=".8"/><ellipse cx="18" cy="13" rx="16" ry="3" fill="#54585e" opacity=".7"/><ellipse cx="50" cy="10" rx="6" ry="2" fill="#40506a"/><ellipse cx="60" cy="20" rx="30" ry="2.5" fill="#50565e" opacity=".7"/>
<path d="M0 20 L20 22 L45 28 L70 32 L106 30 V40 L60 45 Z" fill="#3e4a58" opacity=".8"/>
<path d="M55 42 C70 34 90 32 106 34 V56 L85 55 L70 48 Z" fill="#342e32"/>
<path d="M55 65 L60 48 L80 55 L106 58 V65 Z" fill="#5a666c"/>
<path d="M0 18 C12 20 22 30 35 38 C50 46 62 56 72 65 H0 Z" fill="#3e3630"/>
<path d="M0 46 C8 42 18 40 26 40 L28 42 C18 44 8 48 0 52 Z" fill="#6c6860"/>
<path d="M0 50 L30 44 L40 65 H0 Z" fill="#463c32" opacity=".6"/></g></svg></div><div class="nm">image22.jpg</div><div class="dt">01-02-23</div></div>
</div>

<!-- MODAL -->
<div id="modal">
  <div id="mhead">
    <div class="abs" style="left:12px;top:8px;font-size:11.6px;line-height:14px;color:#1a1a1a">Move file</div>
    <svg class="abs" style="left:442.5px;top:11px" width="8" height="8" viewBox="0 0 8 8"><path d="M1 1 L7 7 M7 1 L1 7" stroke="#5a4424" stroke-width="1.7"/></svg>
  </div>
  <div class="abs" style="left:12px;top:43px;font-size:9.4px;line-height:12px;color:#1a1a1a">Move "image21.jpg" into "screenshots"?</div>
  <div class="abs" style="left:0;top:69px;width:464px;height:1px;background:#dcdcdc"></div>
  <div class="mbtn" style="left:275px;width:49px;background:#eeeeee;border:1px solid #bbbbbb">Cancel</div>
  <div class="mbtn" style="left:327px;width:42px;background:#e8a33d;border:1px solid #e8a33d">Copy</div>
  <div class="mbtn" style="left:372px;width:81px;background:#e8a33d;border:1px solid #e8a33d">Move this item</div>
</div>
</div>
</body></html>
